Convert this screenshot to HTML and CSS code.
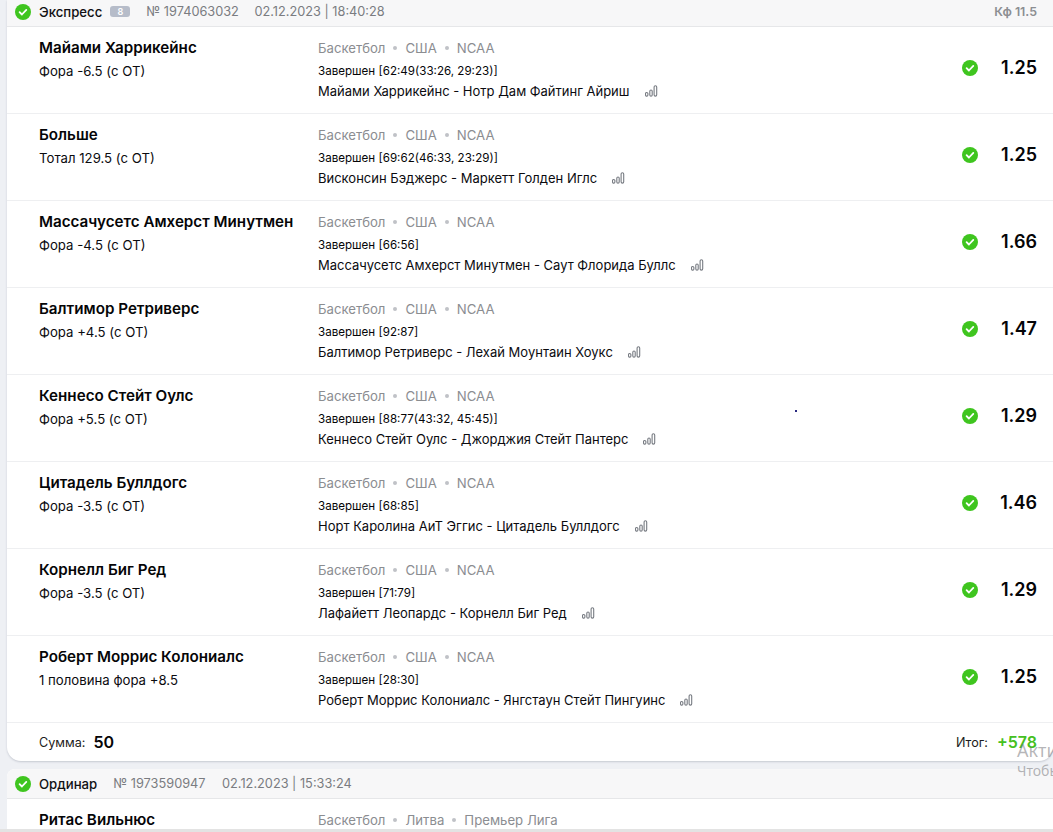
FILE: index.html
```html
<!DOCTYPE html>
<html lang="ru">
<head>
<meta charset="utf-8">
<title>Ставки</title>
<link rel="stylesheet" href="styles.css">
</head>
<body>
<svg class="defs" width="0" height="0" aria-hidden="true">
  <symbol id="ok" viewBox="0 0 16 16"><circle cx="8" cy="8" r="8" fill="#3fc51f"/><path d="M4.6 8.2l2.3 2.3 4.4-4.6" fill="none" stroke="#fff" stroke-width="1.8" stroke-linecap="round" stroke-linejoin="round"/></symbol>
  <symbol id="st" viewBox="0 0 13 12"><g fill="none" stroke="#777b82" stroke-width="1.1"><rect x=".5" y="7.5" width="2.4" height="3.6" rx="1.2"/><rect x="4.8" y="5" width="2.4" height="6.1" rx="1.2"/><rect x="9.1" y=".8" width="2.6" height="10.3" rx="1.3"/></g></symbol>
</svg>
<main class="page">
  <section class="card">
    <header class="head">
      <svg class="ok-big"><use href="#ok"/></svg>
      <span class="type">Экспресс</span><span class="count">8</span>
      <span class="meta num1">№ 1974063032</span><span class="meta date">02.12.2023 | 18:40:28</span>
      <span class="kf">Кф 11.5</span>
    </header>
    <div class="row">
      <div class="pick"><div class="name">Майами Харрикейнс</div><div class="market">Фора -6.5 (с ОТ)</div></div>
      <div class="info"><div class="crumbs"><span>Баскетбол</span><i></i><span>США</span><i></i><span>NCAA</span></div><div class="status">Завершен [62:49(33:26, 29:23)]</div><div class="match">Майами Харрикейнс - Нотр Дам Файтинг Айриш<svg class="stat"><use href="#st"/></svg></div></div>
      <svg class="ok"><use href="#ok"/></svg><div class="odd">1.25</div>
    </div>
    <div class="row">
      <div class="pick"><div class="name">Больше</div><div class="market">Тотал 129.5 (с ОТ)</div></div>
      <div class="info"><div class="crumbs"><span>Баскетбол</span><i></i><span>США</span><i></i><span>NCAA</span></div><div class="status">Завершен [69:62(46:33, 23:29)]</div><div class="match">Висконсин Бэджерс - Маркетт Голден Иглс<svg class="stat"><use href="#st"/></svg></div></div>
      <svg class="ok"><use href="#ok"/></svg><div class="odd">1.25</div>
    </div>
    <div class="row">
      <div class="pick"><div class="name">Массачусетс Амхерст Минутмен</div><div class="market">Фора -4.5 (с ОТ)</div></div>
      <div class="info"><div class="crumbs"><span>Баскетбол</span><i></i><span>США</span><i></i><span>NCAA</span></div><div class="status">Завершен [66:56]</div><div class="match">Массачусетс Амхерст Минутмен - Саут Флорида Буллс<svg class="stat"><use href="#st"/></svg></div></div>
      <svg class="ok"><use href="#ok"/></svg><div class="odd">1.66</div>
    </div>
    <div class="row">
      <div class="pick"><div class="name">Балтимор Ретриверс</div><div class="market">Фора +4.5 (с ОТ)</div></div>
      <div class="info"><div class="crumbs"><span>Баскетбол</span><i></i><span>США</span><i></i><span>NCAA</span></div><div class="status">Завершен [92:87]</div><div class="match">Балтимор Ретриверс - Лехай Моунтаин Хоукс<svg class="stat"><use href="#st"/></svg></div></div>
      <svg class="ok"><use href="#ok"/></svg><div class="odd">1.47</div>
    </div>
    <div class="row">
      <div class="pick"><div class="name">Кеннесо Стейт Оулс</div><div class="market">Фора +5.5 (с ОТ)</div></div>
      <div class="info"><div class="crumbs"><span>Баскетбол</span><i></i><span>США</span><i></i><span>NCAA</span></div><div class="status">Завершен [88:77(43:32, 45:45)]</div><div class="match">Кеннесо Стейт Оулс - Джорджия Стейт Пантерс<svg class="stat"><use href="#st"/></svg></div></div>
      <svg class="ok"><use href="#ok"/></svg><div class="odd">1.29</div>
    </div>
    <div class="row">
      <div class="pick"><div class="name">Цитадель Буллдогс</div><div class="market">Фора -3.5 (с ОТ)</div></div>
      <div class="info"><div class="crumbs"><span>Баскетбол</span><i></i><span>США</span><i></i><span>NCAA</span></div><div class="status">Завершен [68:85]</div><div class="match">Норт Каролина АиТ Эггис - Цитадель Буллдогс<svg class="stat"><use href="#st"/></svg></div></div>
      <svg class="ok"><use href="#ok"/></svg><div class="odd">1.46</div>
    </div>
    <div class="row">
      <div class="pick"><div class="name">Корнелл Биг Ред</div><div class="market">Фора -3.5 (с ОТ)</div></div>
      <div class="info"><div class="crumbs"><span>Баскетбол</span><i></i><span>США</span><i></i><span>NCAA</span></div><div class="status">Завершен [71:79]</div><div class="match">Лафайетт Леопардс - Корнелл Биг Ред<svg class="stat"><use href="#st"/></svg></div></div>
      <svg class="ok"><use href="#ok"/></svg><div class="odd">1.29</div>
    </div>
    <div class="row">
      <div class="pick"><div class="name">Роберт Моррис Колониалс</div><div class="market">1 половина фора +8.5</div></div>
      <div class="info"><div class="crumbs"><span>Баскетбол</span><i></i><span>США</span><i></i><span>NCAA</span></div><div class="status">Завершен [28:30]</div><div class="match">Роберт Моррис Колониалс - Янгстаун Стейт Пингуинс<svg class="stat"><use href="#st"/></svg></div></div>
      <svg class="ok"><use href="#ok"/></svg><div class="odd">1.25</div>
    </div>
    <footer class="foot">
      <span class="label">Сумма:</span><b class="sum">50</b>
      <span class="label total">Итог:</span><b class="win">+578</b>
    </footer>
  </section>
  <section class="card second">
    <header class="head tall">
      <svg class="ok-big"><use href="#ok"/></svg>
      <span class="type">Ординар</span>
      <span class="meta num2">№ 1973590947</span><span class="meta date2">02.12.2023 | 15:33:24</span>
    </header>
    <div class="row">
      <div class="pick"><div class="name">Ритас Вильнюс</div></div>
      <div class="info"><div class="crumbs"><span>Баскетбол</span><i></i><span>Литва</span><i></i><span>Премьер Лига</span></div></div>
    </div>
  </section>
</main>
<div class="strip"></div>
<div class="watermark"><div class="wm1">Акти</div><div class="wm2">Чтобы</div></div>
<span class="speck"></span>
</body>
</html>
```
FILE: styles.css
```css
* { box-sizing: border-box; }
html, body { margin: 0; height: 100%; overflow: hidden; }
body { background: #eef0f4; font-family: Inter, "Noto Sans", sans-serif; color: #050507; position: relative; }
.defs { position: absolute; }
.page { padding-left: 7px; }
.card { background: #fff; border-radius: 0 0 14px 14px; box-shadow: 0 1px 2px rgba(60,70,90,.22); overflow: hidden; }
.second { margin-top: 8px; border-radius: 8px 8px 0 0; box-shadow: none; }
.head { height: 27px; display: flex; align-items: center; background: #f7f7f8; border-bottom: 1px solid #e6e7e9; padding: 0 16px 3px 8px; }
.head.tall { height: 30px; padding-bottom: 0; }
.ok-big { width: 16px; height: 16px; flex: none; }
.type { margin-left: 8px; font-size: 13.2px; font-weight: 500; color: #111114; }
.count { margin-left: 8px; width: 20px; height: 11px; border-radius: 3px; background: #b6bcc9; color: #fff; font-size: 9px; line-height: 11px; text-align: center; font-weight: 600; }
.meta { color: #7a7c81; font-size: 12.75px; }
.num1 { margin-left: 16px; }
.num2 { margin-left: 16px; }
.date { margin-left: 15.5px; }
.date2 { margin-left: 16.5px; }
.kf { margin-left: auto; font-size: 12.4px; font-weight: 600; color: #8c8e92; }
.row { height: 87px; display: flex; align-items: flex-start; padding-left: 32px; border-bottom: 1px solid #eeeff1; position: relative; }
.pick { width: 279px; flex: none; padding-top: 12px; }
.name { font-size: 15.2px; font-weight: 600; line-height: 18px; white-space: nowrap; }
.market { font-size: 13.2px; line-height: 16px; margin-top: 6px; color: #0b0b0f; }
.info { flex: 1; padding-top: 13px; min-width: 0; }
.crumbs { display: flex; align-items: center; font-size: 13.2px; line-height: 16px; color: #8b8d91; }
.crumbs i { width: 4px; height: 4px; border-radius: 50%; background: #c0c2c7; margin: 0 8px; }
.status { font-size: 11.6px; line-height: 14px; margin-top: 8px; }
.match { display: flex; align-items: center; font-size: 13px; line-height: 16px; margin-top: 5px; color: #0b0b0f; white-space: nowrap; }
.stat { width: 13px; height: 12px; margin-left: 15px; flex: none; }
.ok { width: 16px; height: 16px; flex: none; margin-top: 33px; }
.odd { width: 75px; flex: none; margin-top: 31px; padding-right: 16px; text-align: right; font-size: 18px; line-height: 20px; font-weight: 600; }
.foot { height: 38px; display: flex; align-items: center; padding: 0 16px 0 32px; }
.label { font-size: 12.6px; color: #1c1c20; }
.sum { margin-left: 8px; font-size: 16px; font-weight: 600; }
.total { margin-left: auto; }
.win { margin-left: 9px; font-size: 16px; font-weight: 600; color: #45c021; }
.strip { position: absolute; left: 0; right: 0; bottom: 0; height: 3px; background: #e3e3e3; }
.watermark { position: absolute; left: 1017px; top: 738px; color: rgba(110,110,115,.5); white-space: nowrap; font-family: "Noto Sans", sans-serif; }
.wm1 { font-size: 18px; line-height: 24px; }
.wm2 { font-size: 14px; line-height: 18px; }
.speck { position: absolute; left: 795px; top: 410px; width: 2px; height: 2px; background: #2a2a80; }
```
